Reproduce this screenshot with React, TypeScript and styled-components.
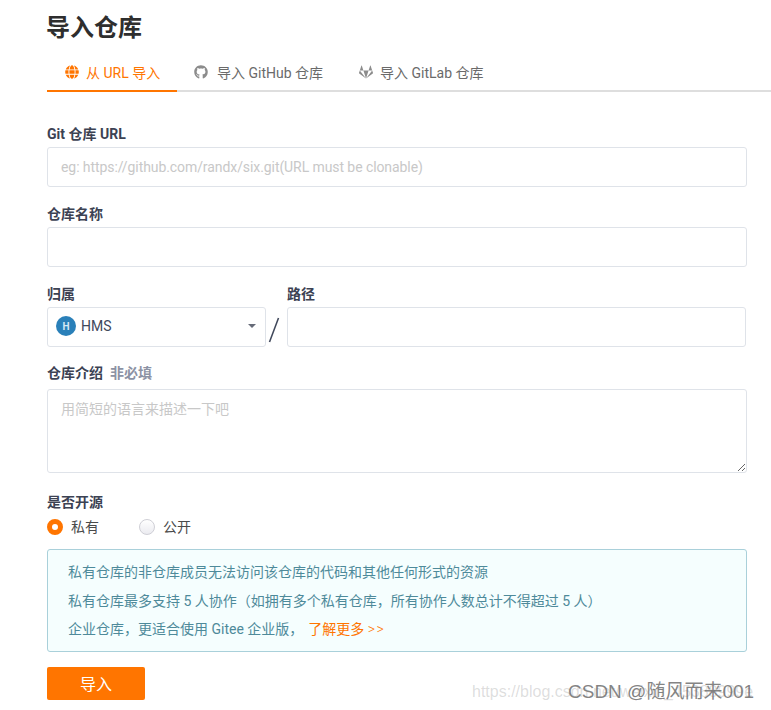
import React from "react";
import styled, { createGlobalStyle } from "styled-components";
import { FaGithub, FaGitlab, FaGlobe } from "react-icons/fa";

const GlobalStyle = createGlobalStyle`
  html, body {
    margin: 0;
    padding: 0;
    background: #fff;
  }
  body {
    font-family: Roboto, "Noto Sans CJK SC", sans-serif;
    overflow: hidden;
  }
  * {
    box-sizing: border-box;
  }
`;

const Page = styled.div`
  position: relative;
  width: 771px;
  height: 710px;
  padding: 11px 0 0 47px;
  overflow: hidden;
`;

const Title = styled.h1`
  margin: 0 0 0 -1px;
  font-size: 24px;
  line-height: 34px;
  font-weight: 700;
  color: #2e2e2e;
`;

const Tabs = styled.div`
  display: flex;
  height: 37px;
  margin-top: 10px;
  border-bottom: 2px solid #dedede;
`;

const Tab = styled.div<{ $active?: boolean; $width: number; $inset: number; $gap: number }>`
  display: flex;
  align-items: center;
  gap: ${(p) => p.$gap}px;
  width: ${(p) => p.$width}px;
  height: 37px;
  padding: 0 0 2px ${(p) => p.$inset}px;
  font-size: 14px;
  color: ${(p) => (p.$active ? "#ff7500" : "#6a6a6a")};
  border-bottom: 2px solid ${(p) => (p.$active ? "#ff7500" : "transparent")};
  white-space: nowrap;

  svg {
    width: 14px;
    height: 14px;
    color: ${(p) => (p.$active ? "#ff7500" : "#8c8c8c")};
  }
`;

const Form = styled.form`
  width: 700px;
  margin-top: 32px;
`;

const Field = styled.div<{ $gap?: number }>`
  margin-bottom: ${(p) => p.$gap ?? 17}px;
`;

const Label = styled.div<{ $after?: number }>`
  font-size: 14px;
  line-height: 20px;
  font-weight: 700;
  color: #3c4253;
  margin-bottom: ${(p) => p.$after ?? 3}px;
`;

const Optional = styled.span`
  margin-left: 7px;
  color: #8c92a4;
`;

const TextInput = styled.input`
  display: block;
  width: 100%;
  height: 40px;
  padding: 0 13px;
  border: 1px solid #dfe3e9;
  border-radius: 3px;
  outline: none;
  font-family: inherit;
  font-size: 14px;
  color: #40485b;

  &::placeholder {
    color: #c8c8c8;
    letter-spacing: -0.08px;
  }
`;

const TextArea = styled.textarea`
  display: block;
  width: 100%;
  height: 84px;
  padding: 9px 13px;
  border: 1px solid #dfe3e9;
  border-radius: 3px;
  outline: none;
  resize: vertical;
  font-family: inherit;
  font-size: 14px;
  line-height: 20px;

  &::placeholder {
    color: #c8c8c8;
  }
`;

const OwnerRow = styled.div`
  display: flex;
  align-items: flex-end;
  margin-bottom: 16px;
`;

const OwnerCol = styled.div`
  width: 219px;
`;

const Slash = styled.svg`
  display: block;
  flex: none;
  width: 21px;
  height: 40px;
  stroke: #40485b;
  stroke-width: 1.6;
`;

const PathCol = styled.div`
  width: 459px;
`;

const Select = styled.div`
  display: flex;
  align-items: center;
  height: 40px;
  padding: 0 9px 2px 8px;
  border: 1px solid #dfe3e9;
  border-radius: 3px;
  font-size: 14px;
  color: #40485b;
`;

const Avatar = styled.span`
  display: flex;
  align-items: center;
  justify-content: center;
  width: 20px;
  height: 20px;
  margin-right: 5px;
  border-radius: 50%;
  background: #2a80b9;
  color: #d5e8f5;
  font-size: 10px;
  font-weight: 700;
`;

const Caret = styled.span`
  width: 0;
  height: 0;
  margin-left: auto;
  border-left: 4px solid transparent;
  border-right: 4px solid transparent;
  border-top: 4px solid #666b78;
`;

const Radios = styled.div`
  display: flex;
  align-items: center;
  height: 20px;
  margin-bottom: 12px;
`;

const Radio = styled.label<{ $width: number }>`
  display: flex;
  align-items: center;
  gap: 8px;
  width: ${(p) => p.$width}px;
  font-size: 14px;
  line-height: 18px;
  padding-bottom: 1px;
  color: #4a4a4a;
`;

const RadioDot = styled.span<{ $checked?: boolean }>`
  width: 16px;
  height: 16px;
  border-radius: 50%;
  ${(p) =>
    p.$checked
      ? "background: #fff; border: 5px solid #ff7500;"
      : "background: linear-gradient(#fff, #ebebf0); border: 1px solid #cfcfd6;"}
`;

const Notice = styled.div`
  height: 103px;
  padding: 8px 20px;
  border: 1px solid #a9d0da;
  border-radius: 3px;
  background: #f5fefe;
  font-size: 14px;
  line-height: 28.5px;
  color: #4e8a9a;
`;

const More = styled.a`
  margin-left: 5px;
  color: #ff7500;
`;

const Chevrons = styled.span`
  font-weight: 300;
  letter-spacing: 1.5px;
`;

const Submit = styled.button`
  display: block;
  width: 98px;
  height: 33px;
  margin-top: 15px;
  padding: 0 0 2px;
  border: none;
  border-radius: 2px;
  background: #ff7500;
  color: #fff;
  font-family: inherit;
  font-size: 16px;
`;

const WatermarkUrl = styled.div`
  position: absolute;
  left: 472px;
  top: 682px;
  font-family: "Liberation Sans", sans-serif;
  font-size: 16px;
  line-height: 20px;
  color: rgba(120, 120, 120, 0.25);
  white-space: nowrap;
`;

const WatermarkName = styled.div`
  position: absolute;
  left: 568px;
  top: 680px;
  font-family: "Liberation Sans", "Noto Sans CJK SC", sans-serif;
  font-size: 19px;
  line-height: 24px;
  color: rgba(110, 110, 110, 0.85);
  white-space: nowrap;
`;

export default function App() {
  return (
    <>
      <GlobalStyle />
      <Page>
        <Title>导入仓库</Title>
        <Tabs>
          <Tab $active $width={130} $inset={18} $gap={7}>
            <FaGlobe />
            从 URL 导入
          </Tab>
          <Tab $width={164} $inset={17} $gap={9}>
            <FaGithub />
            导入 GitHub 仓库
          </Tab>
          <Tab $width={160} $inset={18} $gap={7}>
            <FaGitlab />
            导入 GitLab 仓库
          </Tab>
        </Tabs>
        <Form>
          <Field>
            <Label>Git 仓库 URL</Label>
            <TextInput placeholder="eg: https://github.com/randx/six.git(URL must be clonable)" />
          </Field>
          <Field>
            <Label>仓库名称</Label>
            <TextInput />
          </Field>
          <OwnerRow>
            <OwnerCol>
              <Label>归属</Label>
              <Select>
                <Avatar>H</Avatar>
                HMS
                <Caret />
              </Select>
            </OwnerCol>
            <Slash viewBox="0 0 21 40">
              <line x1="3.5" y1="35" x2="12.5" y2="11" />
            </Slash>
            <PathCol>
              <Label>路径</Label>
              <TextInput />
            </PathCol>
          </OwnerRow>
          <Field $gap={19}>
            <Label $after={6}>
              仓库介绍<Optional>非必填</Optional>
            </Label>
            <TextArea placeholder="用简短的语言来描述一下吧" />
          </Field>
          <Label $after={5}>是否开源</Label>
          <Radios>
            <Radio $width={92}>
              <RadioDot $checked />
              私有
            </Radio>
            <Radio $width={80}>
              <RadioDot />
              公开
            </Radio>
          </Radios>
          <Notice>
            <div>私有仓库的非仓库成员无法访问该仓库的代码和其他任何形式的资源</div>
            <div>私有仓库最多支持 5 人协作（如拥有多个私有仓库，所有协作人数总计不得超过 5 人）</div>
            <div>
              企业仓库，更适合使用 Gitee 企业版，<More>了解更多 <Chevrons>&gt;&gt;</Chevrons></More>
            </div>
          </Notice>
          <Submit type="button">导入</Submit>
        </Form>
        <WatermarkUrl>https://blog.csdn.net/weixin_45388999e</WatermarkUrl>
        <WatermarkName>CSDN @随风而来001</WatermarkName>
      </Page>
    </>
  );
}
